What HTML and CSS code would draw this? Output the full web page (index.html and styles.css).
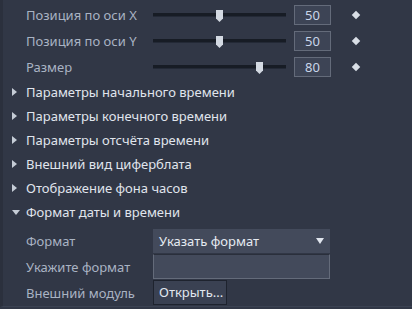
FILE: index.html
```html
<!DOCTYPE html>
<html>
<head>
<meta charset="utf-8">
<link rel="stylesheet" href="styles.css">
</head>
<body>
<div class="panel">
  <div class="slider-row">
    <span class="label">Позиция по оси X</span>
    <div class="slider"><div class="track"></div><div class="thumb" style="left:63px"></div></div>
    <div class="num">50</div>
    <span class="diamond"></span>
  </div>
  <div class="slider-row">
    <span class="label">Позиция по оси Y</span>
    <div class="slider"><div class="track"></div><div class="thumb" style="left:63px"></div></div>
    <div class="num">50</div>
    <span class="diamond"></span>
  </div>
  <div class="slider-row">
    <span class="label">Размер</span>
    <div class="slider"><div class="track"></div><div class="thumb" style="left:103px"></div></div>
    <div class="num">80</div>
    <span class="diamond"></span>
  </div>

  <div class="section"><span class="tri right"></span>Параметры начального времени</div>
  <div class="section"><span class="tri right"></span>Параметры конечного времени</div>
  <div class="section"><span class="tri right"></span>Параметры отсчёта времени</div>
  <div class="section"><span class="tri right"></span>Внешний вид циферблата</div>
  <div class="section"><span class="tri right"></span>Отображение фона часов</div>
  <div class="section"><span class="tri down"></span>Формат даты и времени</div>

  <div class="form">
    <span class="flabel">Формат</span>
    <div class="select">Указать формат<span class="sel-arrow"></span></div>
    <span class="flabel">Укажите формат</span>
    <div class="textbox"></div>
    <span class="flabel">Внешний модуль</span>
    <div class="btn-wrap"><div class="button">Открыть...</div></div>
  </div>
</div>
</body>
</html>
```

FILE: styles.css
```css
* { box-sizing: border-box; }
html, body { margin: 0; padding: 0; }
body {
  width: 412px;
  height: 309px;
  overflow: hidden;
  background: #313746;
  font-family: "Noto Sans", "Open Sans", sans-serif;
  font-size: 13px;
}
.panel {
  height: 307px;
  overflow: hidden;
  border-left: 3px solid #2b303d;
  border-bottom: 1px solid #3b4252;
  padding-top: 2px;
  display: flex;
  flex-direction: column;
}
.slider-row {
  height: 26px;
  flex: none;
  display: flex;
  align-items: center;
}
.label {
  width: 150px;
  padding-left: 23px;
  color: #a9b3c3;
  white-space: nowrap;
}
.slider {
  position: relative;
  width: 133px;
  height: 26px;
  display: flex;
  align-items: center;
}
.track {
  width: 100%;
  height: 4px;
  background: #171c25;
  border-bottom: 1px solid #232936;
}
.thumb {
  position: absolute;
  top: 8px;
  width: 7px;
  height: 12px;
  background: #d3d9e2;
  clip-path: polygon(0 0, 100% 0, 100% 70%, 50% 100%, 0 70%);
}
.num {
  margin-left: 8px;
  width: 37px;
  height: 20px;
  border: 1px solid #646b7a;
  background: #3d4455;
  color: #c9d6ea;
  text-align: center;
  line-height: 18px;
}
.diamond {
  margin-left: 22px;
  width: 6px;
  height: 6px;
  background: #d9dee6;
  transform: rotate(45deg);
}
.section {
  height: 24px;
  flex: none;
  display: flex;
  align-items: center;
  color: #e0e5ed;
  white-space: nowrap;
}
.tri {
  width: 23px;
  display: flex;
  justify-content: flex-start;
  padding-left: 9px;
}
.tri::before {
  content: "";
  display: block;
  width: 0;
  height: 0;
}
.tri.right::before {
  border-top: 4px solid transparent;
  border-bottom: 4px solid transparent;
  border-left: 5px solid #c5ccd6;
}
.tri.down::before {
  border-left: 4px solid transparent;
  border-right: 4px solid transparent;
  border-top: 5px solid #c5ccd6;
}
.form {
  margin-top: 4px;
  display: grid;
  grid-template-columns: 150px 177px;
  grid-template-rows: 25px 25px 26px;
  row-gap: 1px;
  align-items: center;
}
.flabel {
  padding-left: 23px;
  color: #a9b3c3;
  white-space: nowrap;
}
.select {
  position: relative;
  height: 24px;
  background: #434a5b;
  color: #e6ebf2;
  padding-left: 6px;
  line-height: 24px;
}
.sel-arrow {
  position: absolute;
  right: 6px;
  top: 9px;
  border-left: 4px solid transparent;
  border-right: 4px solid transparent;
  border-top: 6px solid #e1e6ee;
}
.textbox {
  height: 25px;
  background: #434a5b;
  border: 1px solid #646b7a;
  border-top-color: #2a2f3b;
}
.btn-wrap {
  display: flex;
  height: 26px;
}
.button {
  height: 25px;
  padding: 0 3px 0 5px;
  background: #3a4152;
  border: 1px solid #1e232e;
  color: #e1e7ef;
  line-height: 23px;
}
```
